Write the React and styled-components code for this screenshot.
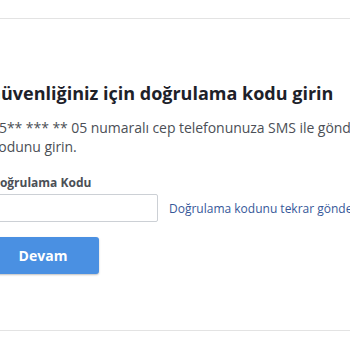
import React from "react";
import styled, { createGlobalStyle } from "styled-components";

const Global = createGlobalStyle`
  html, body { margin: 0; padding: 0; background: #fff; }
  body { font-family: "Open Sans", "DejaVu Sans", sans-serif; overflow: hidden; }
`;

const Page = styled.div`
  width: 350px;
  height: 350px;
  padding-top: 18px;
  box-sizing: border-box;
  overflow: hidden;
`;

const Card = styled.section`
  border-top: 1px solid #e3e3e3;
  border-bottom: 1px solid #e3e3e3;
  height: 313px;
  box-sizing: border-box;
  padding-top: 63px;
  margin-left: -9px;
  width: 400px;
`;

const Title = styled.h2`
  margin: 0 0 0 -3px;
  font-size: 18px;
  line-height: 22px;
  font-weight: bold;
  color: #1d2129;
  white-space: nowrap;
`;

const Text = styled.p`
  margin: 14px 0 0;
  font-size: 14px;
  line-height: 19px;
  color: #4b4f56;
  white-space: nowrap;
  letter-spacing: -0.05px;
`;

const Label = styled.label`
  display: block;
  margin-top: 19px;
  font-size: 12px;
  line-height: 16px;
  font-weight: bold;
  color: #4b4f56;
`;

const Row = styled.div`
  display: flex;
  align-items: center;
  gap: 11px;
  margin-top: 3px;
`;

const Input = styled.input`
  width: 167px;
  height: 28px;
  box-sizing: border-box;
  border: 1px solid #ccd0d5;
  border-radius: 2px;
  padding: 0 6px;
  font-size: 12px;
`;

const Link = styled.a`
  font-size: 12px;
  color: #365899;
  text-decoration: none;
  white-space: nowrap;
`;

const Button = styled.button`
  display: block;
  margin: 15px 0 0 -4px;
  width: 112px;
  height: 37px;
  border: none;
  border-radius: 3px;
  background: #4a90e2;
  color: #fff;
  font-family: "Open Sans", sans-serif;
  font-size: 14px;
  font-weight: bold;
  box-shadow: 0 1px 2px rgba(0, 0, 0, 0.25);
`;

export default function App() {
  return (
    <Page>
      <Global />
      <Card>
        <Title>Güvenliğiniz için doğrulama kodu girin</Title>
        <Text>
          05** *** ** 05 numaralı cep telefonunuza SMS ile gönderilen doğrulama
          <br />
          kodunu girin.
        </Text>
        <Label htmlFor="kod">Doğrulama Kodu</Label>
        <Row>
          <Input id="kod" type="text" />
          <Link href="#">Doğrulama kodunu tekrar gönder</Link>
        </Row>
        <Button>Devam</Button>
      </Card>
    </Page>
  );
}
